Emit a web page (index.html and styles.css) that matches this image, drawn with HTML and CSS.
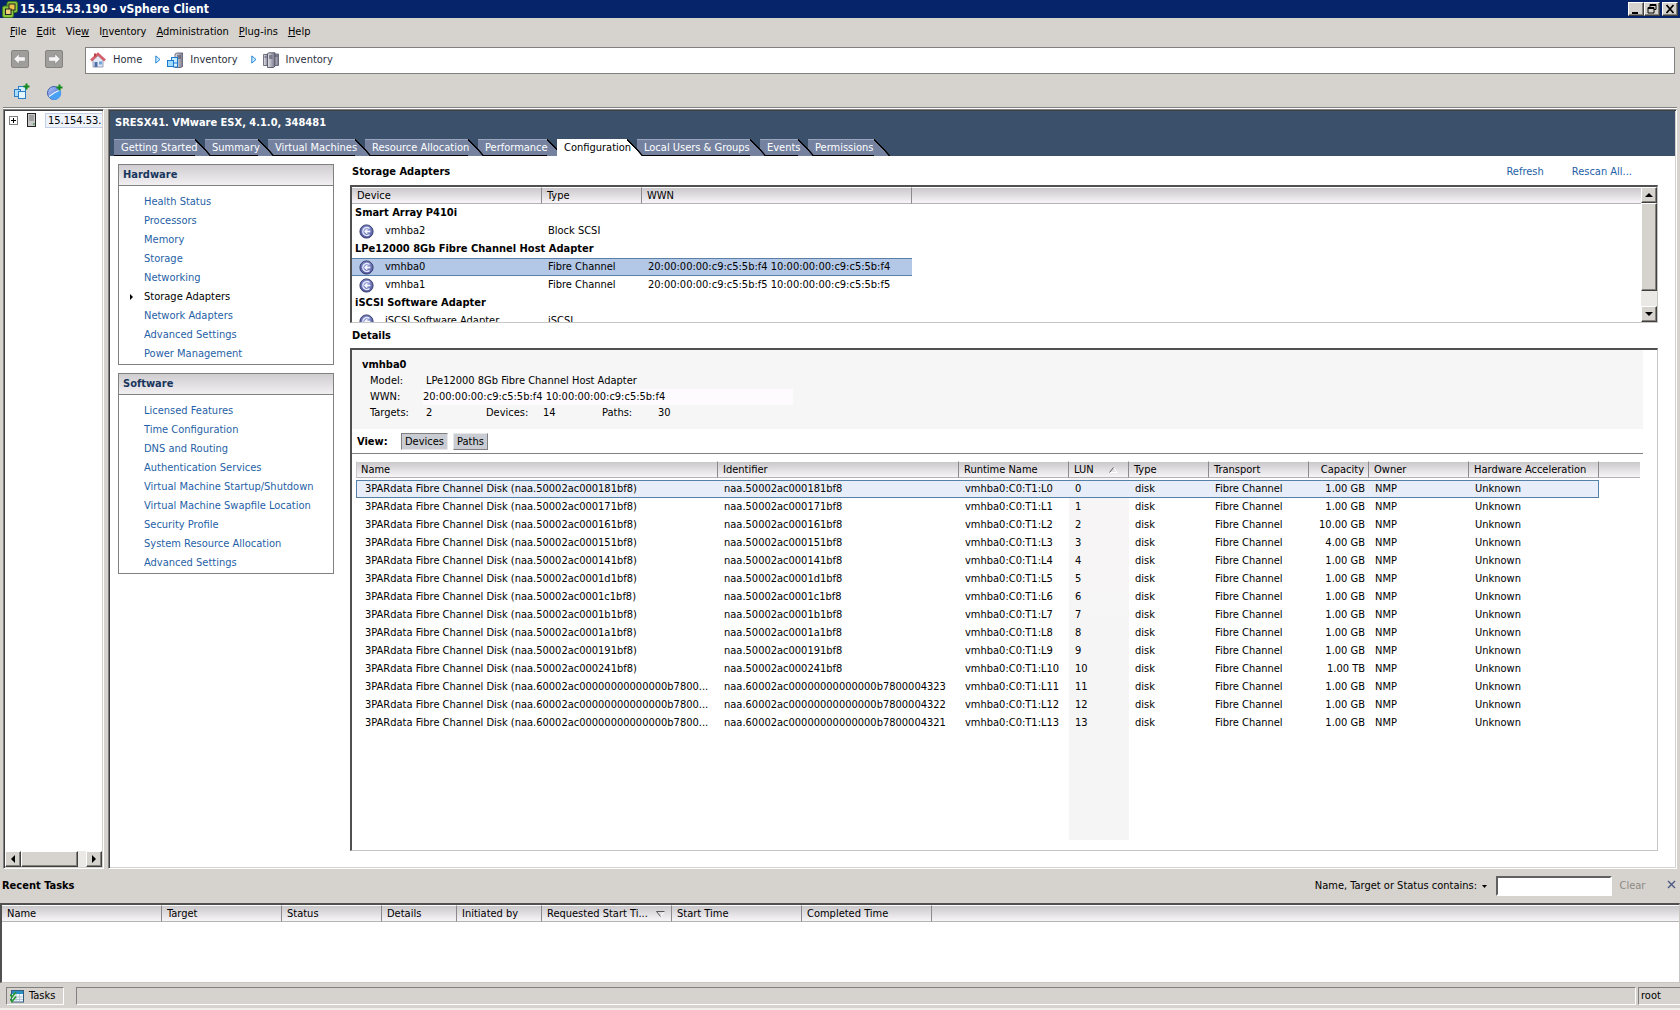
FILE: index.html
```html
<!DOCTYPE html>
<html lang="en">
<head>
<meta charset="utf-8">
<title>15.154.53.190 - vSphere Client</title>
<link rel="stylesheet" href="styles.css">
</head>
<body>
<svg class="defs" aria-hidden="true">
  <defs>
    <radialGradient id="ball" cx="50%" cy="40%" r="60%"><stop offset="0" stop-color="#a9b4ea"/><stop offset="1" stop-color="#4a5196"/></radialGradient>
    <linearGradient id="pie" x1="0" y1="0" x2="1" y2="1"><stop offset="0" stop-color="#b4ccff"/><stop offset="1" stop-color="#3157c4"/></linearGradient>
    <linearGradient id="steel" x1="0" y1="0" x2="1" y2="0"><stop offset="0" stop-color="#e4e4ea"/><stop offset="1" stop-color="#77778a"/></linearGradient>
  </defs>
  <symbol id="adapter" viewBox="0 0 15 15">
    <circle cx="7.5" cy="7.5" r="6.6" fill="url(#ball)" stroke="#3d4274" stroke-width="1"/>
    <path d="M10.500 4.500A4 4 0 1 0 10.500 10.500" fill="none" stroke="#e6eaff" stroke-width="1.400"/>
    <path d="M8.300 4.500 5 7.500l3.300 3V8.300h3V6.700h-3z" fill="#f6f8ff"/>
  </symbol>
  <symbol id="crumb" viewBox="0 0 6 9"><path d="M.8.9 5 4.500.8 8.100z" fill="#c8ecff" stroke="#2a86d8"/></symbol>
</svg>

<div class="app">
  <header class="titlebar">
    <svg class="logo" viewBox="0 0 16 17"><rect x="5" y=".5" width="10.500" height="11" rx="2" fill="#8cc63f" stroke="#3f7a1c"/><rect x=".5" y="5" width="11" height="11.500" rx="2" fill="#8cc63f" stroke="#3f7a1c"/><path d="M6 5.500h5v5.500H6z" fill="#8cc63f"/><rect x="7" y="3" width="6" height="6" fill="#f0c34a" stroke="#222"/><rect x="3.500" y="8" width="5.500" height="5.500" fill="#f0d27a" stroke="#222"/></svg>
    <h1>15.154.53.190 - vSphere Client</h1>
    <div class="winbtns">
      <button class="raised" aria-label="Minimize"><svg viewBox="0 0 12 10"><path d="M2 8h6v2H2z"/></svg></button>
      <button class="raised" aria-label="Restore"><svg viewBox="0 0 12 10"><path d="M4 .5h6v5H8M4 1.500h6M4 .5v3M2 4.500h6M2 3.500h6v5.500H2z" fill="none" stroke="#000"/></svg></button>
      <button class="raised close" aria-label="Close"><svg viewBox="0 0 12 10"><path d="M2.500 1 9.500 9M9.500 1 2.500 9" stroke="#000" stroke-width="1.800"/></svg></button>
    </div>
  </header>

  <nav class="menubar">
    <a href="#"><u>F</u>ile</a><a href="#"><u>E</u>dit</a><a href="#">Vie<u>w</u></a><a href="#">I<u>n</u>ventory</a><a href="#"><u>A</u>dministration</a><a href="#"><u>P</u>lug-ins</a><a href="#"><u>H</u>elp</a>
  </nav>

  <div class="navrow">
    <button class="navbtn" aria-label="Back"><svg viewBox="0 0 18 18"><path d="M2 9l6-6v3.500h7v5H8V15z" fill="#f4f4f4" stroke="#777" stroke-width=".6"/></svg></button>
    <button class="navbtn" aria-label="Forward"><svg viewBox="0 0 18 18"><path d="M16 9l-6-6v3.500H3v5h7V15z" fill="#f4f4f4" stroke="#777" stroke-width=".6"/></svg></button>
    <nav class="crumbs">
      <svg class="ico" viewBox="0 0 16 16"><path d="M3 8l5-4.500L13 8v7H3z" fill="#e4e8f4" stroke="#8288a8" stroke-width=".8"/><path d="M1 8.500 8 2l7 6.500" fill="none" stroke="#d2606a" stroke-width="2.600"/><path d="M4 1.500h2v3H4z" fill="#b8404a"/><path d="M4.500 10h3v5h-3z" fill="#4f6fa8"/><path d="M9 9.500h3v3H9z" fill="#6fa4d8"/></svg>
      <a href="#">Home</a>
      <svg class="sep"><use href="#crumb"/></svg>
      <svg class="ico" viewBox="0 0 16 16"><path d="M8 2l2-1h6v13l-2 1.500H8z" fill="url(#steel)" stroke="#55556a" stroke-width=".8"/><path d="M10 4h4M10 6h4" stroke="#44445a"/><rect x="4.500" y="5.500" width="6" height="6" fill="#c8ecff" stroke="#1d78d0"/><rect x=".5" y="8.500" width="6" height="6" fill="#9fdcff" stroke="#1d78d0"/><rect x="6.500" y="11" width="4" height="4" fill="#d8f2ff" stroke="#1d78d0"/></svg>
      <a href="#">Inventory</a>
      <svg class="sep"><use href="#crumb"/></svg>
      <svg class="ico" viewBox="0 0 16 16"><path d="M.5 2.500h5v11h-5z" fill="url(#steel)" stroke="#55556a" stroke-width=".8"/><path d="M10 2h5.500v11.500H10z" fill="url(#steel)" stroke="#55556a" stroke-width=".8"/><path d="M4.500 1.500 6 .8h6v13.400l-1.500 1.300h-6z" fill="url(#steel)" stroke="#444458" stroke-width=".8"/><path d="M6 4h3.500M6 6h3.500M12 4h2.500M1.500 5h2" stroke="#44445a"/></svg>
      <a href="#">Inventory</a>
    </nav>
  </div>

  <div class="toolbar">
    <button class="tool" aria-label="New virtual machine"><svg viewBox="0 0 18 18"><rect x="5.500" y="3.500" width="7" height="8" fill="#d4f0ff" stroke="#2a7fc8"/><rect x="1.500" y="6.500" width="6" height="7" fill="#a9dcff" stroke="#2a7fc8"/><rect x="5.500" y="8.500" width="7" height="7" fill="#e4f7ff" stroke="#2a7fc8"/><path d="M13.500.5v6M10.500 3.500h6" stroke="#118a1c" stroke-width="2"/></svg></button>
    <button class="tool" aria-label="New resource pool"><svg viewBox="0 0 18 18"><circle cx="8" cy="10" r="6.500" fill="url(#pie)" stroke="#27459c" stroke-width=".8"/><path d="M8 10l6-3.500A6.500 6.500 0 0 1 3 14z" fill="#4aa0f4"/><path d="M3 13.500 8 10l6-3" fill="none" stroke="#e8f2ff" stroke-width="1.100"/><path d="M13.500 1.500v6M10.500 4.500h6" stroke="#118a1c" stroke-width="2"/></svg></button>
  </div>

  <div class="main">
    <aside class="tree sunken">
      <div class="node">
        <button class="expander" aria-label="Expand"><svg viewBox="0 0 7 7"><path d="M1 3.500h5M3.500 1v5" stroke="#000"/></svg></button>
        <svg class="host" viewBox="0 0 9 14"><rect x=".5" y=".5" width="8" height="13" fill="#c8c8c8" stroke="#222"/><path d="M2 3h5M2 5h5M2 7h5" stroke="#777"/><path d="M6 10h1.500v2H6z" fill="#5a9a5a"/></svg>
        <a href="#">15.154.53.190</a>
      </div>
      <div class="hscroll">
        <button class="raised arrow" aria-label="Scroll left"><svg viewBox="0 0 8 8"><path d="M6 0v8L2 4z"/></svg></button>
        <div class="raised hthumb"></div>
        <button class="raised arrow" aria-label="Scroll right"><svg viewBox="0 0 8 8"><path d="M2 0v8l4-4z"/></svg></button>
      </div>
    </aside>

    <section class="workspace sunken">
      <div class="banner">
        <h2>SRESX41. VMware ESX, 4.1.0, 348481</h2>
        <div class="tabs" role="tablist">
          <button role="tab">Getting Started</button>
          <button role="tab">Summary</button>
          <button role="tab">Virtual Machines</button>
          <button role="tab">Resource Allocation</button>
          <button role="tab">Performance</button>
          <button role="tab" class="active" aria-selected="true">Configuration</button>
          <button role="tab">Local Users &amp; Groups</button>
          <button role="tab">Events</button>
          <button role="tab">Permissions</button>
        </div>
      </div>

      <div class="content">
        <div class="side">
          <nav class="box">
            <h3>Hardware</h3>
            <ul>
              <li><a href="#">Health Status</a></li>
              <li><a href="#">Processors</a></li>
              <li><a href="#">Memory</a></li>
              <li><a href="#">Storage</a></li>
              <li><a href="#">Networking</a></li>
              <li class="current"><a href="#">Storage Adapters</a></li>
              <li><a href="#">Network Adapters</a></li>
              <li><a href="#">Advanced Settings</a></li>
              <li><a href="#">Power Management</a></li>
            </ul>
          </nav>
          <nav class="box">
            <h3>Software</h3>
            <ul>
              <li><a href="#">Licensed Features</a></li>
              <li><a href="#">Time Configuration</a></li>
              <li><a href="#">DNS and Routing</a></li>
              <li><a href="#">Authentication Services</a></li>
              <li><a href="#">Virtual Machine Startup/Shutdown</a></li>
              <li><a href="#">Virtual Machine Swapfile Location</a></li>
              <li><a href="#">Security Profile</a></li>
              <li><a href="#">System Resource Allocation</a></li>
              <li><a href="#">Advanced Settings</a></li>
            </ul>
          </nav>
        </div>

        <div class="panel">
          <div class="heading">
            <h3>Storage Adapters</h3>
            <a href="#">Refresh</a>
            <a href="#">Rescan All...</a>
          </div>
          <div class="adapters inset">
            <table class="grid">
              <colgroup><col class="c-device"><col class="c-kind"><col class="c-wwn"><col></colgroup>
              <thead><tr><th>Device</th><th>Type</th><th>WWN</th><th></th></tr></thead>
              <tbody>
                <tr class="group"><td colspan="4">Smart Array P410i</td></tr>
                <tr><td><svg class="hba"><use href="#adapter"/></svg>vmhba2</td><td>Block SCSI</td><td></td><td></td></tr>
                <tr class="group"><td colspan="4">LPe12000 8Gb Fibre Channel Host Adapter</td></tr>
                <tr class="selected"><td><svg class="hba"><use href="#adapter"/></svg>vmhba0</td><td>Fibre Channel</td><td>20:00:00:00:c9:c5:5b:f4 10:00:00:00:c9:c5:5b:f4</td><td></td></tr>
                <tr><td><svg class="hba"><use href="#adapter"/></svg>vmhba1</td><td>Fibre Channel</td><td>20:00:00:00:c9:c5:5b:f5 10:00:00:00:c9:c5:5b:f5</td><td></td></tr>
                <tr class="group"><td colspan="4">iSCSI Software Adapter</td></tr>
                <tr><td><svg class="hba"><use href="#adapter"/></svg>iSCSI Software Adapter</td><td>iSCSI</td><td></td><td></td></tr>
              </tbody>
            </table>
            <div class="vscroll">
              <button class="raised arrow" aria-label="Scroll up"><svg viewBox="0 0 8 8"><path d="M0 6h8L4 2z"/></svg></button>
              <div class="raised vthumb"></div>
              <button class="raised arrow" aria-label="Scroll down"><svg viewBox="0 0 8 8"><path d="M0 2h8L4 6z"/></svg></button>
            </div>
          </div>

          <h3 class="details-title">Details</h3>
          <div class="details inset">
            <div class="summary">
              <h4>vmhba0</h4>
              <dl>
                <dt>Model:</dt><dd class="wide">LPe12000 8Gb Fibre Channel Host Adapter</dd>
                <dt>WWN:</dt><dd class="wide wwn">20:00:00:00:c9:c5:5b:f4 10:00:00:00:c9:c5:5b:f4</dd>
                <dt>Targets:</dt><dd>2</dd><dt>Devices:</dt><dd>14</dd><dt>Paths:</dt><dd>30</dd>
              </dl>
            </div>
            <div class="viewbar">
              <b>View:</b>
              <button class="pressed">Devices</button>
              <button>Paths</button>
            </div>
            <div class="devices">
              <table class="grid">
                <colgroup><col class="c-name"><col class="c-id"><col class="c-runtime"><col class="c-lun"><col class="c-type"><col class="c-transport"><col class="c-capacity"><col class="c-owner"><col class="c-accel"><col class="c-rest"></colgroup>
                <thead><tr><th>Name</th><th>Identifier</th><th>Runtime Name</th><th>LUN<svg class="sort" viewBox="0 0 9 6"><path d="M4.500.5 8.500 5.500h-8" stroke="#fff" fill="none"/><path d="M.5 5.500 4.500.5" stroke="#555" fill="none"/></svg></th><th>Type</th><th>Transport</th><th class="num">Capacity</th><th>Owner</th><th>Hardware Acceleration</th><th></th></tr></thead>
                <tbody>
                  <tr class="picked"><td>3PARdata Fibre Channel Disk (naa.50002ac000181bf8)</td><td>naa.50002ac000181bf8</td><td>vmhba0:C0:T1:L0</td><td>0</td><td>disk</td><td>Fibre Channel</td><td class="num">1.00 GB</td><td>NMP</td><td>Unknown</td><td></td></tr>
                  <tr><td>3PARdata Fibre Channel Disk (naa.50002ac000171bf8)</td><td>naa.50002ac000171bf8</td><td>vmhba0:C0:T1:L1</td><td>1</td><td>disk</td><td>Fibre Channel</td><td class="num">1.00 GB</td><td>NMP</td><td>Unknown</td><td></td></tr>
                  <tr><td>3PARdata Fibre Channel Disk (naa.50002ac000161bf8)</td><td>naa.50002ac000161bf8</td><td>vmhba0:C0:T1:L2</td><td>2</td><td>disk</td><td>Fibre Channel</td><td class="num">10.00 GB</td><td>NMP</td><td>Unknown</td><td></td></tr>
                  <tr><td>3PARdata Fibre Channel Disk (naa.50002ac000151bf8)</td><td>naa.50002ac000151bf8</td><td>vmhba0:C0:T1:L3</td><td>3</td><td>disk</td><td>Fibre Channel</td><td class="num">4.00 GB</td><td>NMP</td><td>Unknown</td><td></td></tr>
                  <tr><td>3PARdata Fibre Channel Disk (naa.50002ac000141bf8)</td><td>naa.50002ac000141bf8</td><td>vmhba0:C0:T1:L4</td><td>4</td><td>disk</td><td>Fibre Channel</td><td class="num">1.00 GB</td><td>NMP</td><td>Unknown</td><td></td></tr>
                  <tr><td>3PARdata Fibre Channel Disk (naa.50002ac0001d1bf8)</td><td>naa.50002ac0001d1bf8</td><td>vmhba0:C0:T1:L5</td><td>5</td><td>disk</td><td>Fibre Channel</td><td class="num">1.00 GB</td><td>NMP</td><td>Unknown</td><td></td></tr>
                  <tr><td>3PARdata Fibre Channel Disk (naa.50002ac0001c1bf8)</td><td>naa.50002ac0001c1bf8</td><td>vmhba0:C0:T1:L6</td><td>6</td><td>disk</td><td>Fibre Channel</td><td class="num">1.00 GB</td><td>NMP</td><td>Unknown</td><td></td></tr>
                  <tr><td>3PARdata Fibre Channel Disk (naa.50002ac0001b1bf8)</td><td>naa.50002ac0001b1bf8</td><td>vmhba0:C0:T1:L7</td><td>7</td><td>disk</td><td>Fibre Channel</td><td class="num">1.00 GB</td><td>NMP</td><td>Unknown</td><td></td></tr>
                  <tr><td>3PARdata Fibre Channel Disk (naa.50002ac0001a1bf8)</td><td>naa.50002ac0001a1bf8</td><td>vmhba0:C0:T1:L8</td><td>8</td><td>disk</td><td>Fibre Channel</td><td class="num">1.00 GB</td><td>NMP</td><td>Unknown</td><td></td></tr>
                  <tr><td>3PARdata Fibre Channel Disk (naa.50002ac000191bf8)</td><td>naa.50002ac000191bf8</td><td>vmhba0:C0:T1:L9</td><td>9</td><td>disk</td><td>Fibre Channel</td><td class="num">1.00 GB</td><td>NMP</td><td>Unknown</td><td></td></tr>
                  <tr><td>3PARdata Fibre Channel Disk (naa.50002ac000241bf8)</td><td>naa.50002ac000241bf8</td><td>vmhba0:C0:T1:L10</td><td>10</td><td>disk</td><td>Fibre Channel</td><td class="num">1.00 TB</td><td>NMP</td><td>Unknown</td><td></td></tr>
                  <tr><td>3PARdata Fibre Channel Disk (naa.60002ac00000000000000b7800...</td><td>naa.60002ac00000000000000b7800004323</td><td>vmhba0:C0:T1:L11</td><td>11</td><td>disk</td><td>Fibre Channel</td><td class="num">1.00 GB</td><td>NMP</td><td>Unknown</td><td></td></tr>
                  <tr><td>3PARdata Fibre Channel Disk (naa.60002ac00000000000000b7800...</td><td>naa.60002ac00000000000000b7800004322</td><td>vmhba0:C0:T1:L12</td><td>12</td><td>disk</td><td>Fibre Channel</td><td class="num">1.00 GB</td><td>NMP</td><td>Unknown</td><td></td></tr>
                  <tr><td>3PARdata Fibre Channel Disk (naa.60002ac00000000000000b7800...</td><td>naa.60002ac00000000000000b7800004321</td><td>vmhba0:C0:T1:L13</td><td>13</td><td>disk</td><td>Fibre Channel</td><td class="num">1.00 GB</td><td>NMP</td><td>Unknown</td><td></td></tr>
                </tbody>
              </table>
            </div>
          </div>
        </div>
      </div>
    </section>
  </div>

  <div class="taskbar">
    <h3>Recent Tasks</h3>
    <label for="filter">Name, Target or Status contains:</label>
    <svg class="drop" viewBox="0 0 5 3"><path d="M0 0h5L2.500 3z"/></svg>
    <input id="filter" type="text">
    <button class="clear" disabled>Clear</button>
    <button class="dismiss" aria-label="Close tasks"><svg viewBox="0 0 9 9"><path d="M1 1l7 7M8 1 1 8" stroke="#4a5a84" stroke-width="1.400"/></svg></button>
  </div>
  <div class="tasks inset">
    <table class="grid">
      <colgroup><col class="t-name"><col class="t-target"><col class="t-status"><col class="t-details"><col class="t-by"><col class="t-req"><col class="t-start"><col class="t-done"><col></colgroup>
      <thead><tr><th>Name</th><th>Target</th><th>Status</th><th>Details</th><th>Initiated by</th><th>Requested Start Ti...<svg class="sort" viewBox="0 0 9 6"><path d="M4.500 5.500 8.500.5" stroke="#fff" fill="none"/><path d="M8.500.5h-8L4.500 5.500" stroke="#555" fill="none"/></svg></th><th>Start Time</th><th>Completed Time</th><th></th></tr></thead>
    </table>
  </div>

  <footer class="status">
    <button class="tasks-btn"><svg viewBox="0 0 14 14"><rect x="1.500" y="1.500" width="12" height="11.500" fill="#eef6ff" stroke="#345a7c"/><path d="M2 2h11v3H2z" fill="#2a8fc4"/><path d="M2 8h11M2 10.500h11M6 5v8M9.500 5v8" stroke="#a8bccc" stroke-width=".8"/><path d="M0 5.500 2 8l4-5M0 10l2 2.500 4-5" fill="none" stroke="#2c9a32" stroke-width="1.700"/></svg>Tasks</button>
    <div class="cell"></div>
    <div class="cell user">root</div>
  </footer>
</div>
</body>
</html>
```
FILE: styles.css
```css
* { box-sizing: border-box; }

body {
  margin: 0;
  font: 11px/16px "DejaVu Sans Condensed", "DejaVu Sans", sans-serif;
  color: #000;
  background: #d6d2cd;
}

h1, h2, h3, h4, ul, dl, dd { margin: 0; padding: 0; font-size: 11px; }
ul { list-style: none; }
a { color: inherit; text-decoration: none; }
button { margin: 0; padding: 0; border: 0; background: none; font: inherit; color: inherit; }
svg { display: block; flex: none; }
.defs { position: absolute; width: 0; height: 0; }

.app { display: flex; flex-direction: column; min-height: 100vh; }

.raised {
  background: #d6d2cd;
  border: 1px solid;
  border-color: #fff #404040 #404040 #fff;
  box-shadow: inset -1px -1px #85817c;
}
.sunken { border: 1px solid; border-color: #808080 #fff #fff #808080; box-shadow: inset 1px 1px #404040, inset -1px -1px #d6d2cd; padding: 1px; }
.inset { border: solid; border-width: 2px 1px 1px 2px; border-color: #505050 #c8c6c3 #c8c6c3 #505050; background: #fff; }

/* Title bar */
.titlebar { display: flex; align-items: center; height: 18px; padding: 0 2px; gap: 2px; background: #06246a; color: #fff; }
.titlebar h1 { flex: 1; font-size: 12px; }
.logo { width: 16px; height: 17px; }
.winbtns { display: flex; }
.winbtns button { width: 16px; height: 14px; }
.winbtns svg { width: 12px; height: 10px; margin: 1px; }
.winbtns .close { margin-left: 2px; }

/* Menu, navigation and tools */
.menubar { display: flex; gap: 10px; height: 29px; padding: 0 10px; line-height: 28px; }
.navrow { display: flex; align-items: center; padding: 0 5px 0 11px; }
.navbtn { width: 18px; height: 18px; margin: 0 16px 3px 0; border: 1px solid #85837f; border-radius: 2px; background: #a09e9b; }
.navbtn svg { width: 16px; height: 16px; }
.crumbs { display: flex; flex: 1; align-items: center; height: 27px; margin-left: 6px; padding: 0 4px 2px; border: 1px solid #808080; background: #fff; color: #2b3040; }
.ico { width: 16px; height: 16px; margin-right: 7px; }
.sep { width: 6px; height: 9px; margin: 0 6px 0 13px; }
.toolbar { display: flex; gap: 15px; padding: 9px 13px 6px; }
.tool, .tool svg { width: 18px; height: 18px; }

/* Main split */
.main { display: flex; flex: 1; gap: 4px; margin: 0 3px; padding-top: 1px; border-top: 1px solid #808080; box-shadow: inset 0 1px #fff; }
.main > * { background: #fff; }
.tree { display: flex; flex-direction: column; flex: none; width: 101px; }
.node { display: flex; flex: 1 1 0; align-items: flex-start; gap: 9px; margin: 2px 0 0 4px; overflow: hidden; white-space: nowrap; }
.expander { flex: none; width: 9px; height: 9px; margin-top: 3px; border: 1px solid #808080; }
.expander svg { width: 7px; height: 7px; }
.host { width: 9px; height: 14px; }
.node a { padding: 0 2px; border: 1px solid #c4d0e8; background: #eef2fb; line-height: 13px; }
.hscroll { display: flex; height: 16px; background: #ebe9e6; }
.arrow { flex: none; width: 16px; height: 16px; }
.arrow svg { width: 8px; height: 8px; margin: 0 auto; }
.hthumb { width: 57px; margin-right: auto; }

.workspace { display: flex; flex-direction: column; flex: 1; min-width: 0; }
.banner { flex: none; padding: 4px 4px 0; background: #3a506b; color: #fff; }
.banner h2 { margin-left: 1px; line-height: 16px; padding-bottom: 8px; }
.tabs { display: grid; grid-template-columns: 91px 63px 97px 113px 79px 80px 123px 48px 66px; height: 17px; }
.tabs button {
  position: relative;
  z-index: 1;
  height: 17px;
  margin-right: 10px;
  padding-left: 7px;
  border-top: 1px solid #9aa4bd;
  border-bottom: 1px solid #000;
  background: #7482a0;
  line-height: 14px;
  text-align: left;
  white-space: nowrap;
}
.tabs button:last-child { margin-right: 0; }
.tabs button::after {
  content: "";
  position: absolute;
  z-index: -1;
  top: -1px;
  left: 100%;
  width: 16px;
  height: 17px;
  background: linear-gradient(to top right, #7482a0 46%, #000 47%, #000 52%, transparent 53%);
}
/* Each tab's slope lies over the left end of the next tab. */
.tabs button:nth-child(1) { z-index: 9; }
.tabs button:nth-child(2) { z-index: 8; }
.tabs button:nth-child(3) { z-index: 7; }
.tabs button:nth-child(4) { z-index: 6; }
.tabs button:nth-child(5) { z-index: 5; }
.tabs button:nth-child(7) { z-index: 4; }
.tabs button:nth-child(8) { z-index: 3; }
.tabs .active { z-index: 10; border-color: #fff; background: #fff; color: #000; }
.tabs .active::after { background: linear-gradient(to top right, #fff 46%, #000 47%, #000 52%, transparent 53%); }

.content { display: flex; flex: 1; gap: 16px; padding: 8px 17px 16px 8px; }

/* Left navigation boxes */
.side { flex: none; width: 216px; }
.box { margin-bottom: 8px; padding-bottom: 1px; border: 1px solid #808080; }
.box h3 { height: 21px; padding-left: 4px; border-bottom: 1px solid #808080; background: linear-gradient(#d0cdd0, #f2eff2); color: #17365d; line-height: 20px; }
.box ul { padding-top: 6px; }
.box li { padding-left: 25px; color: #1f5fa6; line-height: 19px; }
.box .current { position: relative; color: #000; }
.current::before { content: ""; position: absolute; left: 11px; top: 7px; border: 3px solid transparent; border-left-color: #000; border-right: 0; }

/* Right column */
.panel { display: flex; flex: 1; flex-direction: column; min-width: 0; }
.heading { display: flex; height: 21px; gap: 28px; padding: 0 26px 0 2px; line-height: 16px; }
.heading h3 { flex: 1; line-height: 16px; }
.heading a { color: #1f5fa6; }
.details-title { padding: 5px 2px 4px; }

.grid { width: 100%; table-layout: fixed; border-spacing: 0; }
.grid th { position: relative; height: 17px; padding: 0 5px; border-top: 1px solid #fff; border-bottom: 1px solid #b4b2b4; border-right: 1px solid #8c8a8c; background: linear-gradient(#cbc8cb, #f8f5f8); box-shadow: 1px 0 #fff; font-weight: 400; line-height: 14px; text-align: left; white-space: nowrap; }
.grid th:last-child { border-right: 0; box-shadow: none; }
.grid td { height: 18px; padding: 0 6px; line-height: 16px; white-space: nowrap; }
.grid .num { text-align: right; }
.sort { position: absolute; right: 10px; top: 5px; width: 9px; height: 6px; }

.adapters { display: flex; align-items: flex-start; height: 138px; overflow: hidden; }
.adapters .grid { flex: 1; width: auto; }
.c-device { width: 190px; }
.c-kind { width: 100px; }
.c-wwn { width: 270px; }
.group td { padding-left: 3px; font-weight: 700; }
.hba { float: left; width: 15px; height: 15px; margin: 1px 11px 0 1px; }
.selected td:not(:last-child) { border: solid #5a7fa8; border-width: 1px 0; background: #b3c7e6; line-height: 14px; }
.selected .hba { margin-top: 0; }
.vscroll { display: flex; flex-direction: column; align-self: stretch; width: 16px; background: #ebe9e6; }
.vthumb { height: 88px; margin-bottom: auto; }

.details { flex: 1; }
.summary { margin-right: 14px; padding: 7px 10px 8px; background: #f6f6f6; }
.summary dl { display: grid; grid-template-columns: 53px 63px 54px 62px 53px 1fr; margin-left: 8px; }
.summary dd { padding-left: 3px; }
.summary .wide { grid-column: 2 / -1; }
.summary .wwn { width: 370px; padding-left: 0; background: #fdfbfd; }
.viewbar { display: flex; align-items: center; height: 25px; margin-right: 14px; padding: 1px 0 0 5px; border-bottom: 1px solid #808080; }
.viewbar b { width: 44px; }
.viewbar button { height: 17px; margin-right: 5px; padding: 0 3px; border: 1px solid; border-color: #e8e8e8 #808080 #808080 #e8e8e8; background: #c9cdd3; line-height: 15px; }
.viewbar .pressed { border-color: #808080 #e8e8e8 #e8e8e8 #808080; }

/* The tint marks the sorted LUN column down to the foot of the list. */
.devices { height: 379px; margin: 7px 17px 0 4px; background: linear-gradient(#f7f5f6, #f5f5f5) right 511px top 0 / 60px 100% no-repeat; }
.devices th:first-child { border-left: 1px solid #c8c6c8; padding-left: 4px; }
.devices tbody::before { content: ""; display: block; height: 2px; }
.devices td { padding-left: 6px; }
.devices td:first-child { padding-left: 9px; }
.devices .num { padding-right: 4px; }
.c-id { width: 241px; }
.c-runtime { width: 110px; }
.c-lun { width: 60px; }
.c-type { width: 80px; }
.c-transport { width: 100px; }
.c-capacity { width: 60px; }
.c-owner { width: 100px; }
.c-accel { width: 130px; }
.c-rest { width: 41px; }
.picked td:not(:last-child) { border: solid #5580a8; border-width: 1px 0; background: #e8eef9; line-height: 14px; }
.picked td:first-child { border-left-width: 1px; padding-left: 8px; }
.picked td:nth-last-child(2) { border-right-width: 1px; }

/* Recent tasks */
.taskbar { display: flex; align-items: center; height: 34px; padding: 0 4px 0 2px; }
.taskbar h3 { flex: 1; }
.drop { width: 5px; height: 3px; margin: 0 9px 0 5px; }
.taskbar input { width: 116px; height: 20px; border: 2px solid; border-color: #606060 #fff #fff #606060; background: #fff; font: inherit; }
.clear { width: 27px; margin: 0 21px 0 7px; color: #8d8a86; }
.dismiss, .dismiss svg { width: 9px; height: 9px; }
.dismiss { margin-bottom: 4px; }
.tasks { height: 80px; }
.t-name { width: 160px; }
.t-target { width: 120px; }
.t-status { width: 100px; }
.t-details { width: 75px; }
.t-by { width: 85px; }
.t-req, .t-start, .t-done { width: 130px; }
.tasks .sort { right: 6px; }

.status { display: flex; height: 27px; padding: 4px 0 3px; border-bottom: 2px solid #f0eeeb; }
.status .cell, .tasks-btn { height: 18px; border: 1px solid; border-color: #808080 #fff #fff #808080; }
.tasks-btn { display: flex; align-items: center; width: 58px; margin: 0 12px 0 6px; padding-left: 3px; gap: 5px; }
.tasks-btn svg { width: 14px; height: 14px; }
.cell { flex: 1; margin-right: 2px; }
.status .user { flex: none; width: 42px; margin: 0; padding-left: 2px; border-right: 0; }
```
